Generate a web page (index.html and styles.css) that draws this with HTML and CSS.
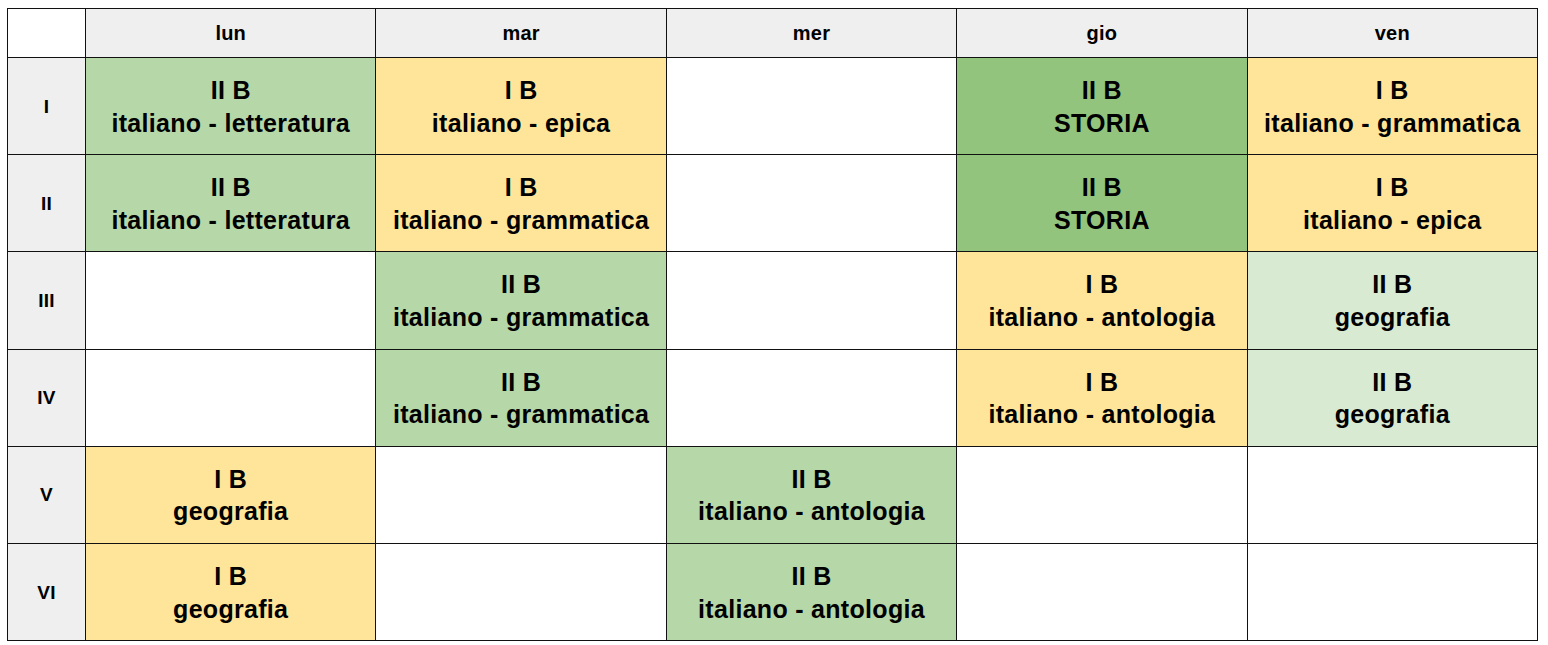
FILE: index.html
```html
<!DOCTYPE html>
<html lang="it">
<head>
<meta charset="utf-8">
<title>Orario</title>
<link rel="stylesheet" href="styles.css">
</head>
<body>
<div class="timetable">
  <div class="corner"></div>
  <div class="day">lun</div>
  <div class="day">mar</div>
  <div class="day">mer</div>
  <div class="day">gio</div>
  <div class="day">ven</div>

  <div class="hour">I</div>
  <div class="cell green"><span>II B</span><span>italiano - letteratura</span></div>
  <div class="cell yellow"><span>I B</span><span>italiano - epica</span></div>
  <div class="cell"></div>
  <div class="cell dark"><span>II B</span><span>STORIA</span></div>
  <div class="cell yellow"><span>I B</span><span>italiano - grammatica</span></div>

  <div class="hour">II</div>
  <div class="cell green"><span>II B</span><span>italiano - letteratura</span></div>
  <div class="cell yellow"><span>I B</span><span>italiano - grammatica</span></div>
  <div class="cell"></div>
  <div class="cell dark"><span>II B</span><span>STORIA</span></div>
  <div class="cell yellow"><span>I B</span><span>italiano - epica</span></div>

  <div class="hour">III</div>
  <div class="cell"></div>
  <div class="cell green"><span>II B</span><span>italiano - grammatica</span></div>
  <div class="cell"></div>
  <div class="cell yellow"><span>I B</span><span>italiano - antologia</span></div>
  <div class="cell pale"><span>II B</span><span>geografia</span></div>

  <div class="hour">IV</div>
  <div class="cell"></div>
  <div class="cell green"><span>II B</span><span>italiano - grammatica</span></div>
  <div class="cell"></div>
  <div class="cell yellow"><span>I B</span><span>italiano - antologia</span></div>
  <div class="cell pale"><span>II B</span><span>geografia</span></div>

  <div class="hour">V</div>
  <div class="cell yellow"><span>I B</span><span>geografia</span></div>
  <div class="cell"></div>
  <div class="cell green"><span>II B</span><span>italiano - antologia</span></div>
  <div class="cell"></div>
  <div class="cell"></div>

  <div class="hour">VI</div>
  <div class="cell yellow"><span>I B</span><span>geografia</span></div>
  <div class="cell"></div>
  <div class="cell green"><span>II B</span><span>italiano - antologia</span></div>
  <div class="cell"></div>
  <div class="cell"></div>
</div>
</body>
</html>
```

FILE: styles.css
```css
html, body {
  margin: 0;
  padding: 0;
  background: #ffffff;
}

body {
  font-family: "Liberation Sans", Arial, sans-serif;
  color: #000000;
}

.timetable {
  box-sizing: border-box;
  width: 1531px;
  margin: 8px 0 0 7px;
  padding: 1px;
  display: grid;
  grid-template-columns: 77px repeat(5, 1fr);
  grid-template-rows: 48px repeat(6, 96.2px);
  gap: 1px;
  background: #111111;
}

.corner {
  background: #ffffff;
}

.day,
.hour {
  background: #efefef;
  display: flex;
  align-items: center;
  justify-content: center;
  font-weight: bold;
}

.day {
  font-size: 20px;
  letter-spacing: 0.2px;
}

.hour {
  font-size: 19px;
  letter-spacing: 0.3px;
  padding-top: 1px;
}

.cell {
  background: #ffffff;
  display: flex;
  flex-direction: column;
  align-items: center;
  justify-content: center;
  font-weight: bold;
  font-size: 25px;
  letter-spacing: 0.3px;
  line-height: 32.5px;
  white-space: nowrap;
  padding-top: 1px;
}

.green {
  background: #b6d7a8;
}

.yellow {
  background: #ffe599;
}

.dark {
  background: #93c47d;
}

.pale {
  background: #d9ead3;
}
```
